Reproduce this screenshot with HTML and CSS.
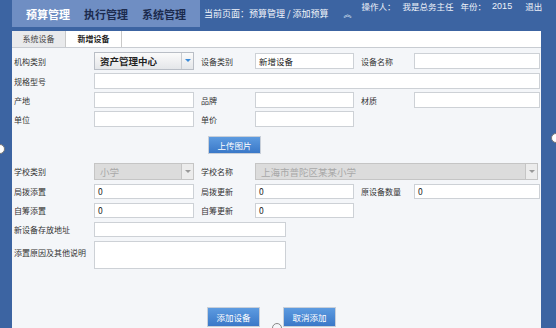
FILE: index.html
```html
<!DOCTYPE html>
<html lang="zh-CN">
<head>
<meta charset="utf-8">
<title>添加预算</title>
<link rel="stylesheet" href="styles.css">
</head>
<body>
<div class="page">
  <header class="topbar">
    <nav class="mainnav">
      <span class="nav-item active">预算管理</span>
      <span class="nav-item">执行管理</span>
      <span class="nav-item">系统管理</span>
    </nav>
    <div class="crumb">当前页面：预算管理 / 添加预算</div>
    <div class="collapse">︽</div>
    <div class="userinfo">
      <span>操作人：</span><span class="uname">我是总务主任</span><span>年份：</span><span class="year">2015</span><span class="logout">退出</span>
    </div>
  </header>
  <div class="tabs">
    <div class="tab">系统设备</div>
    <div class="tab active">新增设备</div>
  </div>
  <main class="panel">
    <div class="grid">
      <label class="lbl first">机构类别</label>
      <div class="select strong"><span>资产管理中心</span><span class="arrow blue"></span></div>
      <label class="lbl pad">设备类别</label>
      <div class="input">新增设备</div>
      <label class="lbl pad">设备名称</label>
      <div class="input"></div>

      <label class="lbl first">规格型号</label>
      <div class="input span5"></div>

      <label class="lbl first">产地</label>
      <div class="input"></div>
      <label class="lbl pad">品牌</label>
      <div class="input"></div>
      <label class="lbl pad">材质</label>
      <div class="input"></div>

      <label class="lbl first">单位</label>
      <div class="input"></div>
      <label class="lbl pad">单价</label>
      <div class="input"></div>
    </div>

    <div class="upload-row"><button class="btn">上传图片</button></div>

    <div class="grid grid2">
      <label class="lbl first">学校类别</label>
      <div class="select disabled"><span>小学</span><span class="arrow box"></span></div>
      <label class="lbl pad">学校名称</label>
      <div class="select disabled span3"><span>上海市普陀区某某小学</span><span class="arrow box"></span></div>

      <label class="lbl first">局拨添置</label>
      <div class="input">0</div>
      <label class="lbl pad">局拨更新</label>
      <div class="input">0</div>
      <label class="lbl pad">原设备数量</label>
      <div class="input">0</div>

      <label class="lbl first">自筹添置</label>
      <div class="input">0</div>
      <label class="lbl pad">自筹更新</label>
      <div class="input">0</div>

      <label class="lbl first">新设备存放地址</label>
      <div class="input wide"></div>

      <label class="lbl first top">添置原因及其他说明</label>
      <div class="input wide textarea"></div>
    </div>

    <div class="actions">
      <button class="btn">添加设备</button>
      <button class="btn">取消添加</button>
    </div>
  </main>
</div>
<span class="handle h-left"></span>
<span class="handle h-right"></span>
<span class="handle h-bottom"></span>
</body>
</html>
```
FILE: styles.css
```css
html, body {
  margin: 0;
  padding: 0;
  height: 100%;
  overflow: hidden;
}
body {
  background: #3c64a2;
  font-family: "Noto Sans CJK SC", "DejaVu Sans", sans-serif;
  font-size: 10px;
  color: #333;
  position: relative;
}
.page {
  margin-left: 12px;
  width: 529px;
  display: flex;
  flex-direction: column;
}
.topbar {
  height: 31px;
  display: flex;
  align-items: flex-start;
  color: #fff;
  white-space: nowrap;
}
.mainnav {
  flex: none;
  width: 188px;
  height: 27px;
  background: #6f8ec3;
  display: flex;
  align-items: center;
  gap: 14px;
  padding-left: 14px;
  box-sizing: border-box;
}
.nav-item {
  font-size: 11px;
  font-weight: bold;
  color: #1c2b4e;
  white-space: nowrap;
}
.nav-item.active { color: #fff; }
.crumb {
  flex: none;
  margin-left: 4px;
  height: 27px;
  line-height: 28px;
  font-size: 9px;
  color: #f2f5fb;
}
.collapse {
  flex: none;
  margin-left: 15px;
  height: 27px;
  line-height: 28px;
  font-size: 8px;
  color: #dfe6f3;
}
.userinfo {
  flex: none;
  margin-left: 10px;
  font-size: 8.5px;
  color: #eef2f9;
  display: flex;
  line-height: 12px;
}
.userinfo .uname { margin-left: 7px; margin-right: 7px; }
.userinfo .year { margin-left: 6px; font-family: "Liberation Sans", sans-serif; font-size: 9px; }
.userinfo .logout { margin-left: 13px; }

.tabs {
  height: 16px;
  background: #fff;
  display: flex;
  border-bottom: 1px solid #c8ccd2;
}
.tab {
  width: 54px;
  height: 16px;
  line-height: 16px;
  text-align: center;
  font-size: 8px;
  color: #444;
  background: #e9eaec;
  border-right: 1px solid #c9c9c9;
  box-sizing: border-box;
}
.tab.active {
  width: 56px;
  background: #fff;
  font-weight: bold;
  color: #222;
}

.panel {
  background: #f4f6f9;
  height: 300px;
  padding: 4px 0 0 2px;
  box-sizing: border-box;
}
.grid {
  display: grid;
  grid-template-columns: 80px 100px 61px 99px 60px 126px;
  row-gap: 3px;
  align-items: center;
}
.lbl {
  font-size: 8px;
  color: #333;
  white-space: nowrap;
}
.lbl.first { grid-column: 1; }
.lbl.pad { padding-left: 7px; }
.lbl.top { align-self: start; padding-top: 6px; }
.input {
  height: 16px;
  background: #fff;
  border: 1px solid #cdd1d6;
  box-sizing: border-box;
  font-size: 8.5px;
  line-height: 14px;
  padding-left: 3px;
  color: #222;
}
.span5 { grid-column: 2 / 7; }
.span3 { grid-column: 4 / 7; }
.wide { grid-column: 2 / 5; width: 192px; }
.textarea { height: 28px; }
.select {
  height: 18px;
  border: 1px solid #b9bec6;
  box-sizing: border-box;
  display: flex;
  align-items: center;
  justify-content: space-between;
  padding-left: 5px;
  background: linear-gradient(#fbfbfb, #e4e6e9);
}
.select.strong span:first-child {
  font-weight: bold;
  font-size: 9.5px;
  color: #222;
}
.arrow {
  width: 11px;
  height: 100%;
  position: relative;
  border-left: 1px solid #c9ccd1;
}
.arrow::after {
  content: "";
  position: absolute;
  left: 3px;
  top: 6px;
  border-left: 3px solid transparent;
  border-right: 3px solid transparent;
  border-top: 3px solid #3a8ad8;
}
.select.disabled {
  height: 17px;
  background: #dcdcdc;
  border-color: #c5c5c5;
  padding-left: 5px;
}
.select.disabled span:first-child {
  color: #a8a8a8;
  font-size: 9.5px;
}
.arrow.box {
  background: #ececec;
  border-left: 1px solid #c5c5c5;
}
.arrow.box::after { border-top-color: #999; left: 3px; top: 6px; }
.span3.select { width: 283px; }

.upload-row {
  margin-top: 9px;
  padding-left: 194px;
  height: 18px;
}
.btn {
  width: 53px;
  height: 18px;
  padding: 0;
  border: 1px solid #c8cfd9;
  background: linear-gradient(#5d9be0, #3a78c8);
  color: #fff;
  font-family: "Noto Sans CJK SC", sans-serif;
  font-size: 8.5px;
  line-height: 16px;
  display: block;
}
.grid2 { margin-top: 9px; row-gap: 4px; }
.grid2 .input { height: 15px; line-height: 13px; }
.grid2 .input.textarea { height: 28px; }

.actions {
  margin-top: 38px;
  padding-left: 193px;
  display: flex;
  gap: 23px;
}
.actions .btn { height: 20px; }

.handle {
  position: absolute;
  width: 8px;
  height: 8px;
  border-radius: 50%;
  border: 1px solid #777;
  background: #fff;
}
.h-left { left: -5px; top: 144px; }
.h-right { left: 551px; top: 133px; }
.h-bottom { left: 272px; top: 323px; background: transparent; border-color: #888; }
```
